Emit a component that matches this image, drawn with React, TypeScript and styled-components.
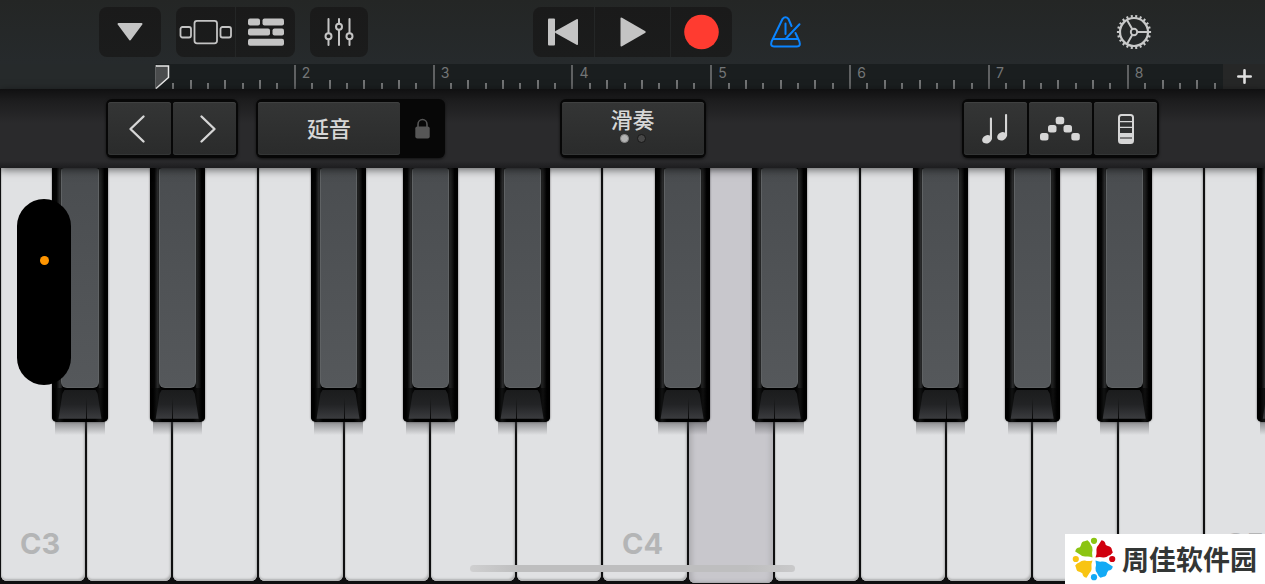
import React from "react";
import styled, { createGlobalStyle, css } from "styled-components";

const GlobalStyle = createGlobalStyle`
  *, *::before, *::after { box-sizing: border-box; }
  html, body { margin: 0; background: #0f0f10; }
  body { font-family: Inter, "Noto Sans CJK SC", sans-serif; overflow: hidden; }
  button { margin: 0; padding: 0; border: 0; font: inherit; color: inherit; background: none; cursor: pointer; }
  svg { display: block; }
`;

const Page = styled.main`
  position: relative;
  display: flex;
  flex-direction: column;
  min-height: 100vh;
  overflow: hidden;
`;

/* ---------- top toolbar ---------- */

const Toolbar = styled.header`
  display: grid;
  grid-template-columns: 1fr auto 1fr;
  align-items: center;
  height: 64px;
  background: linear-gradient(#242625, #262a2c);
`;

const ToolbarSide = styled.div<{ $end?: boolean }>`
  display: flex;
  align-items: center;
  gap: 15px;
  ${(p) =>
    p.$end
      ? css`
          justify-content: space-between;
          padding: 0 113px 0 37px;
        `
      : css`
          padding-left: 99px;
        `}
`;

const ToolGroup = styled.div`
  display: flex;
  gap: 1px;
  height: 50px;
  border-radius: 8px;
  overflow: hidden;
  background: #242626;
`;

const ToolButton = styled.button<{ $width: number }>`
  display: flex;
  align-items: center;
  justify-content: center;
  width: ${(p) => p.$width}px;
  color: #c4c4c4;
  background: linear-gradient(#1a1a1a, #1b1c1c);
`;

const PlainButton = styled.button<{ $tone: string }>`
  display: flex;
  color: ${(p) => p.$tone};
`;

/* ---------- timeline ruler ---------- */

const RulerRow = styled.div`
  display: flex;
  height: 25px;
  background: #262a2b;
`;

const RulerLead = styled.div`
  flex: 0 0 155px;
`;

const Ruler = styled.div`
  position: relative;
  display: flex;
  flex: 1;
  overflow: hidden;
  background: #1a1e1f;
`;

const Bar = styled.div`
  position: relative;
  display: grid;
  grid-template-columns: repeat(8, 1fr);
  align-items: end;
  flex: 0 0 13%;
`;

const Tick = styled.i<{ $height: number }>`
  width: 2px;
  height: ${(p) => p.$height}px;
  background: ${(p) => (p.$height > 20 ? "#5f6162" : "#727475")};
`;

const BarNumber = styled.span`
  position: absolute;
  top: 0;
  left: 8px;
  font-size: 14px;
  line-height: 18px;
  color: #737576;
`;

const Playhead = styled.svg`
  position: absolute;
  top: 1px;
  left: 0;
`;

const AddSection = styled.button`
  display: flex;
  align-items: center;
  justify-content: center;
  width: 42px;
  color: #e0e0e0;
  background: #262727;
`;

/* ---------- instrument control strip ---------- */

const ControlStrip = styled.section`
  position: relative;
  z-index: 2;
  display: grid;
  grid-template-columns: 1fr auto 1fr;
  align-items: start;
  height: 79px;
  padding: 10px 106px 0;
  background: linear-gradient(#101011 0, #1d1d1e 12px, #2a2a2c 34px, #2a2a2c 72px, #1d1d1f 79px);
  box-shadow: 0 2px 8px rgba(0, 0, 0, 0.55);
`;

const ControlSide = styled.div<{ $end?: boolean }>`
  display: flex;
  gap: 18px;
  justify-content: ${(p) => (p.$end ? "flex-end" : "flex-start")};
`;

const PadGroup = styled.div`
  display: flex;
  gap: 2px;
  height: 59px;
  padding: 3px 2px;
  border-radius: 6px;
  background: #070707;
  box-shadow: 0 1px 3px rgba(0, 0, 0, 0.6);
`;

const Pad = styled.button<{ $width: number; $nudge?: "start" | "end" }>`
  display: flex;
  flex-direction: column;
  align-items: center;
  justify-content: center;
  width: ${(p) => p.$width}px;
  padding: ${(p) =>
    p.$nudge === "start" ? "0 6px 0 0" : p.$nudge === "end" ? "0 0 0 6px" : "0"};
  border-radius: 3px;
  font-size: 22px;
  font-weight: 500;
  line-height: 28px;
  color: #d6d6d6;
  background: linear-gradient(#343535, #2a2b2b);
  box-shadow: inset 0 1px 0 #404141, inset 0 -1px 1px #363838;
`;

const LockButton = styled.button`
  display: flex;
  align-items: center;
  justify-content: center;
  width: 41px;
  color: #565656;
`;

const PageDots = styled.span`
  display: flex;
  gap: 8px;
  padding-bottom: 9px;
`;

const PageDot = styled.i<{ $on?: boolean }>`
  width: 9px;
  height: 9px;
  border: 1px solid ${(p) => (p.$on ? "#8a8a8a" : "#181818")};
  border-radius: 50%;
  background: ${(p) => (p.$on ? "#b4b4b4" : "#474747")};
`;

/* ---------- keyboard ---------- */

const Keyboard = styled.section`
  position: relative;
  display: flex;
  flex: 1;
  min-height: 300px;
  overflow: hidden;
  background: #0f0f10;
`;

const KeySlot = styled.div`
  position: relative;
  display: flex;
  flex: 0 0 6.8%;
`;

const WhiteKey = styled.button<{ $pressed?: boolean }>`
  display: flex;
  flex: 1;
  align-items: flex-end;
  margin: 0 1px ${(p) => (p.$pressed ? 1 : 3)}px;
  padding: 0 0 19px 19px;
  border-radius: 0 0 6px 6px;
  font-size: 29px;
  font-weight: 700;
  line-height: 36px;
  color: #b4b5b6;
  ${(p) =>
    p.$pressed
      ? css`
          background: #c8c7cc;
          box-shadow: inset 3px 0 5px #aeadb1, inset -3px 0 5px #b4b3b8, inset 0 -1px 1px #a5a5a8;
        `
      : css`
          background: #e0e1e3;
          box-shadow: inset 1px 0 1px #c4c5c6, inset -1px -2px 2px #b0b1b2;
        `}
`;

const BlackKey = styled.button<{ $left: number }>`
  position: absolute;
  z-index: 1;
  top: 0;
  left: ${(p) => p.$left}%;
  display: flex;
  flex-direction: column;
  width: 64%;
  height: 61%;
  border-radius: 0 0 5px 5px;
  background: linear-gradient(
    90deg,
    #000 0,
    #050505 8%,
    #2b2c2d 14%,
    #1c1d1d 17%,
    #000 19%,
    #000 82%,
    #232424 85%,
    #161616 89%,
    #000 94%
  );
  box-shadow: 0 0 2px rgba(0, 0, 0, 0.6);

  &::after {
    content: "";
    position: absolute;
    top: 100%;
    left: 3px;
    right: 3px;
    height: 13px;
    background: linear-gradient(rgba(60, 60, 64, 0.5), rgba(60, 60, 64, 0));
  }
`;

const KeyTop = styled.span`
  flex: 1;
  margin: 0 9px;
  border: 1px solid #5f6264;
  border-top-color: #45484a;
  border-radius: 3px 3px 6px 6px;
  background: linear-gradient(#4a4d50, #55585b);
`;

const KeyFront = styled.span<{ $seam: number }>`
  position: relative;
  height: 34px;
  border-radius: 0 0 5px 5px;
  background: linear-gradient(90deg, #000 3px, #111212 7px, #000 12px, #000 43px, #0f0f0f 48px, #000 52px);

  &::before {
    content: "";
    position: absolute;
    inset: 2px 0 3px;
    clip-path: polygon(22% 0, 78% 0, 82% 4px, 89% 100%, 11% 100%, 18% 4px);
    background: linear-gradient(#1b1c1d, #222325 50%, #3b3c3f);
  }

  &::after {
    content: "";
    position: absolute;
    top: 10px;
    bottom: 0;
    left: ${(p) => p.$seam}%;
    width: 1px;
    background: linear-gradient(transparent, #000);
  }
`;

const CameraPill = styled.div`
  position: absolute;
  z-index: 3;
  top: 31px;
  left: 17px;
  display: flex;
  justify-content: center;
  width: 54px;
  height: 186px;
  padding-top: 57px;
  border-radius: 27px;
  background: #000;
`;

const MicDot = styled.i`
  width: 9px;
  height: 9px;
  border-radius: 50%;
  background: #ff9500;
`;

const HomeIndicator = styled.div`
  position: absolute;
  z-index: 3;
  bottom: 12px;
  left: 50%;
  width: 325px;
  height: 7px;
  margin-left: -163px;
  border-radius: 4px;
  background: linear-gradient(90deg, #cfcfd0, #bebebf 15%, #bebebf 85%, #c9c9ca);
`;

const Watermark = styled.aside`
  position: absolute;
  z-index: 4;
  right: 0;
  bottom: 0;
  display: flex;
  align-items: center;
  gap: 6px;
  width: 200px;
  height: 50px;
  padding: 0 0 1px 7px;
  font-family: "Noto Sans CJK SC", sans-serif;
  font-size: 27px;
  font-weight: 700;
  line-height: 40px;
  white-space: nowrap;
  color: #333635;
  background: #fff;
`;

/* ---------- icons ---------- */

const DownIcon = () => (
  <svg width="28" height="20" viewBox="0 0 28 20" fill="currentColor" stroke="currentColor" strokeWidth="2" strokeLinejoin="round">
    <path d="M2.500 2H25.500L14 17.500Z" />
  </svg>
);

const BrowserIcon = () => (
  <svg width="54" height="26" viewBox="0 0 54 26" fill="none" stroke="currentColor" strokeWidth="1.800">
    <rect x="1.500" y="8" width="10.500" height="10.500" rx="2" />
    <rect x="15.500" y="1.800" width="22.500" height="22.500" rx="2.500" />
    <rect x="41.500" y="8" width="10.500" height="10.500" rx="2" />
  </svg>
);

const TracksIcon = () => (
  <svg width="36" height="28" viewBox="0 0 36 28" fill="currentColor">
    <rect x="0" y="0.500" width="12" height="7" rx="2" />
    <rect x="14.500" y="0.500" width="21.500" height="7" rx="2" />
    <rect x="0" y="10.500" width="22" height="7" rx="2" />
    <rect x="24.500" y="10.500" width="11.500" height="7" rx="2" />
    <rect x="0" y="20.700" width="36" height="7" rx="2" />
  </svg>
);

const MixerIcon = () => (
  <svg width="30" height="30" viewBox="0 0 30 30" fill="none" stroke="currentColor" strokeWidth="2" strokeLinecap="round">
    <path d="M4.500 2V16M4.500 22.500V28M15 2V6.500M15 13V28M25.500 2V16M25.500 22.500V28" />
    <circle cx="4.500" cy="19.200" r="3" />
    <circle cx="15" cy="9.800" r="3" />
    <circle cx="25.500" cy="19.200" r="3" />
  </svg>
);

const RewindIcon = () => (
  <svg width="32" height="28" viewBox="0 0 32 28" fill="currentColor">
    <rect x="0" y="0.500" width="7" height="27" rx="1" />
    <path d="M28.500 1.300Q30 0.500 30 2V26Q30 27.500 28.500 26.700L7.500 15Q6 14 7.500 13Z" />
  </svg>
);

const PlayIcon = () => (
  <svg width="26" height="30" viewBox="0 0 26 30" fill="currentColor">
    <path d="M0.500 1.500Q0.500 0 2 0.800L25 14Q26.500 15 25 16L2 29.200Q0.500 30 0.500 28.500Z" />
  </svg>
);

const RecordIcon = () => (
  <svg width="36" height="36" viewBox="0 0 36 36">
    <circle cx="17.500" cy="18" r="17.300" fill="#ff3b30" />
  </svg>
);

const MetronomeIcon = () => (
  <svg width="34" height="34" viewBox="0 0 34 34" fill="none" stroke="currentColor" strokeWidth="2" strokeLinecap="round" strokeLinejoin="round">
    <path d="M22.500 11L19.500 4Q16.500 0.500 13.500 4L2.600 26.500Q1 31.500 5 31.500H28Q32 31.500 30.400 26.500L26.500 18" />
    <path d="M3.800 24H29" />
    <path d="M30.500 9.200L17 23.500M16.500 8.500V19" />
  </svg>
);

const GearIcon = () => (
  <svg width="36" height="36" viewBox="0 0 36 36" fill="none" stroke="currentColor">
    <circle cx="18" cy="18" r="14" strokeWidth="2.200" />
    <circle cx="18" cy="18" r="15.800" strokeWidth="2.600" pathLength="88" strokeDasharray="1.800 2.200" strokeDashoffset="0.900" />
    <circle cx="18" cy="18" r="3.200" strokeWidth="1.900" />
    <path d="M21.500 18H32M16.200 15L11 6M16.200 21L11 30" strokeWidth="2" />
  </svg>
);

const PlusIcon = () => (
  <svg width="16" height="16" viewBox="0 0 16 16" stroke="currentColor" strokeWidth="2.600" strokeLinecap="round">
    <path d="M8.500 1.300V13.700M2.300 7.500H14.700" />
  </svg>
);

const ChevronIcon = ({ next }: { next?: boolean }) => (
  <svg width="18" height="30" viewBox="0 0 18 30" fill="none" stroke="currentColor" strokeWidth="2.400" strokeLinecap="round" strokeLinejoin="round">
    <path d={next ? "M2.500 2.500L15.500 15L2.500 27.500" : "M15.500 2.500L2.500 15L15.500 27.500"} />
  </svg>
);

const LockIcon = () => (
  <svg width="16" height="22" viewBox="0 0 16 22">
    <path d="M3 10V6.500A4.500 5 0 0 1 12 6.500V10" fill="none" stroke="currentColor" strokeWidth="1.600" />
    <rect x="0.300" y="8.500" width="14.400" height="12" rx="2" fill="currentColor" />
  </svg>
);

const NotesIcon = () => (
  <svg width="30" height="34" viewBox="0 0 30 34" fill="currentColor">
    <ellipse cx="6" cy="27.300" rx="5" ry="4" transform="rotate(-25 6 27.300)" />
    <rect x="8.900" y="5.500" width="2.100" height="22" rx="1" />
    <ellipse cx="21" cy="24.300" rx="5" ry="4" transform="rotate(-25 21 24.300)" />
    <rect x="24" y="2" width="2.100" height="22.500" rx="1" />
  </svg>
);

const ArpeggioIcon = () => (
  <svg width="44" height="26" viewBox="0 0 44 26" fill="currentColor">
    <rect x="1" y="17" width="8.500" height="7.500" rx="2.500" />
    <rect x="9" y="9" width="8.500" height="7.500" rx="2.500" />
    <rect x="16.700" y="0.700" width="8.500" height="7.500" rx="2.500" />
    <rect x="24.500" y="9" width="8.500" height="7.500" rx="2.500" />
    <rect x="32.300" y="17" width="8.500" height="7.500" rx="2.500" />
  </svg>
);

const WheelIcon = () => (
  <svg width="16" height="30" viewBox="0 0 16 30" fill="none" stroke="currentColor">
    <rect x="1" y="1" width="14" height="28" rx="2.500" strokeWidth="2" />
    <path d="M2 7.600H14M2 13.300H14" strokeWidth="1.200" />
    <path d="M2 19.500H14V28H2Z" fill="currentColor" strokeWidth="1" />
    <path d="M2 24H14" stroke="#3c3d3d" strokeWidth="1.200" />
  </svg>
);

const petals = [
  { fill: "#8bc412", turn: 0 },
  { fill: "#d0000e", turn: 90 },
  { fill: "#13aaf5", turn: 180 },
  { fill: "#f8c412", turn: 270 },
];

const SiteLogo = () => (
  <svg width="44" height="44" viewBox="0 0 44 44">
    {petals.map((petal) => (
      <g key={petal.turn} fill={petal.fill} transform={`rotate(${petal.turn} 22 22)`}>
        <path d="M20.500 20.500Q17 19 14.500 19.500Q10 20 8 17.500L3.200 14.500Q4 10.500 7.500 10.500Q8.500 9.500 9 8Q9.500 4.500 12.500 4.200L15.500 3.200Q18 5 18.500 7.200Q21 10 20.500 13Q19.500 16 20.500 20.500Z" />
        <circle cx="22" cy="3.800" r="3.100" />
      </g>
    ))}
  </svg>
);

/* ---------- data ---------- */

const bars = [1, 2, 3, 4, 5, 6, 7, 8];
const eighths = [0, 1, 2, 3, 4, 5, 6, 7];

type Note = { name: string; sharpAt?: number; seam?: number };

const octave: Note[] = [
  { name: "C", sharpAt: 61, seam: 61 },
  { name: "D", sharpAt: 74, seam: 40 },
  { name: "E" },
  { name: "F", sharpAt: 61, seam: 61 },
  { name: "G", sharpAt: 68, seam: 50 },
  { name: "A", sharpAt: 75, seam: 39 },
  { name: "B" },
];

const keys = Array.from({ length: 15 }, (_, i) => ({
  ...octave[i % 7],
  octave: 3 + Math.floor(i / 7),
}));

const tickHeight = (i: number) => (i === 0 ? 24 : i % 2 ? 6 : 9);

export default function App() {
  return (
    <Page>
      <GlobalStyle />
      <Toolbar>
        <ToolbarSide>
          <ToolGroup>
            <ToolButton $width={62} aria-label="Songs"><DownIcon /></ToolButton>
          </ToolGroup>
          <ToolGroup>
            <ToolButton $width={59} aria-label="Browser"><BrowserIcon /></ToolButton>
            <ToolButton $width={59} aria-label="Tracks"><TracksIcon /></ToolButton>
          </ToolGroup>
          <ToolGroup>
            <ToolButton $width={58} aria-label="Track controls"><MixerIcon /></ToolButton>
          </ToolGroup>
        </ToolbarSide>
        <ToolGroup>
          <ToolButton $width={61} aria-label="Rewind"><RewindIcon /></ToolButton>
          <ToolButton $width={75} aria-label="Play"><PlayIcon /></ToolButton>
          <ToolButton $width={61} aria-label="Record"><RecordIcon /></ToolButton>
        </ToolGroup>
        <ToolbarSide $end>
          <PlainButton $tone="#0a84ff" aria-label="Metronome"><MetronomeIcon /></PlainButton>
          <PlainButton $tone="#c8c9c9" aria-label="Settings"><GearIcon /></PlainButton>
        </ToolbarSide>
      </Toolbar>

      <RulerRow>
        <RulerLead />
        <Ruler>
          {bars.map((bar) => (
            <Bar key={bar}>
              {eighths.map((i) => (
                <Tick key={i} $height={tickHeight(i)} />
              ))}
              {bar > 1 && <BarNumber>{bar}</BarNumber>}
            </Bar>
          ))}
          <Playhead width="15" height="24" viewBox="0 0 15 24">
            <path d="M1 1H13.500V12.500L1 24Z" fill="#4a4c4d" />
            <path d="M1 1H13.500V12.500L1 23.500" fill="none" stroke="#e8e8e8" strokeWidth="1.500" />
          </Playhead>
        </Ruler>
        <AddSection aria-label="Song sections"><PlusIcon /></AddSection>
      </RulerRow>

      <ControlStrip>
        <ControlSide>
          <PadGroup>
            <Pad $width={63} $nudge="start" aria-label="Octave down"><ChevronIcon /></Pad>
            <Pad $width={63} $nudge="end" aria-label="Octave up"><ChevronIcon next /></Pad>
          </PadGroup>
          <PadGroup>
            <Pad $width={142}>延音</Pad>
            <LockButton aria-label="Lock sustain"><LockIcon /></LockButton>
          </PadGroup>
        </ControlSide>
        <PadGroup>
          <Pad $width={142}>
            滑奏
            <PageDots><PageDot $on /><PageDot /></PageDots>
          </Pad>
        </PadGroup>
        <ControlSide $end>
          <PadGroup>
            <Pad $width={63} aria-label="Scale"><NotesIcon /></Pad>
            <Pad $width={63} aria-label="Arpeggiator"><ArpeggioIcon /></Pad>
            <Pad $width={63} aria-label="Keyboard controls"><WheelIcon /></Pad>
          </PadGroup>
        </ControlSide>
      </ControlStrip>

      <Keyboard>
        {keys.map((key, i) => (
          <KeySlot key={i}>
            <WhiteKey $pressed={i === 8} aria-label={`${key.name}${key.octave}`}>
              {key.name === "C" && `C${key.octave}`}
            </WhiteKey>
            {key.sharpAt !== undefined && (
              <BlackKey $left={key.sharpAt} aria-label={`${key.name}♯${key.octave}`}>
                <KeyTop />
                <KeyFront $seam={key.seam ?? 50} />
              </BlackKey>
            )}
          </KeySlot>
        ))}
        <CameraPill><MicDot /></CameraPill>
        <HomeIndicator />
      </Keyboard>

      <Watermark>
        <SiteLogo />
        周佳软件园
      </Watermark>
    </Page>
  );
}
